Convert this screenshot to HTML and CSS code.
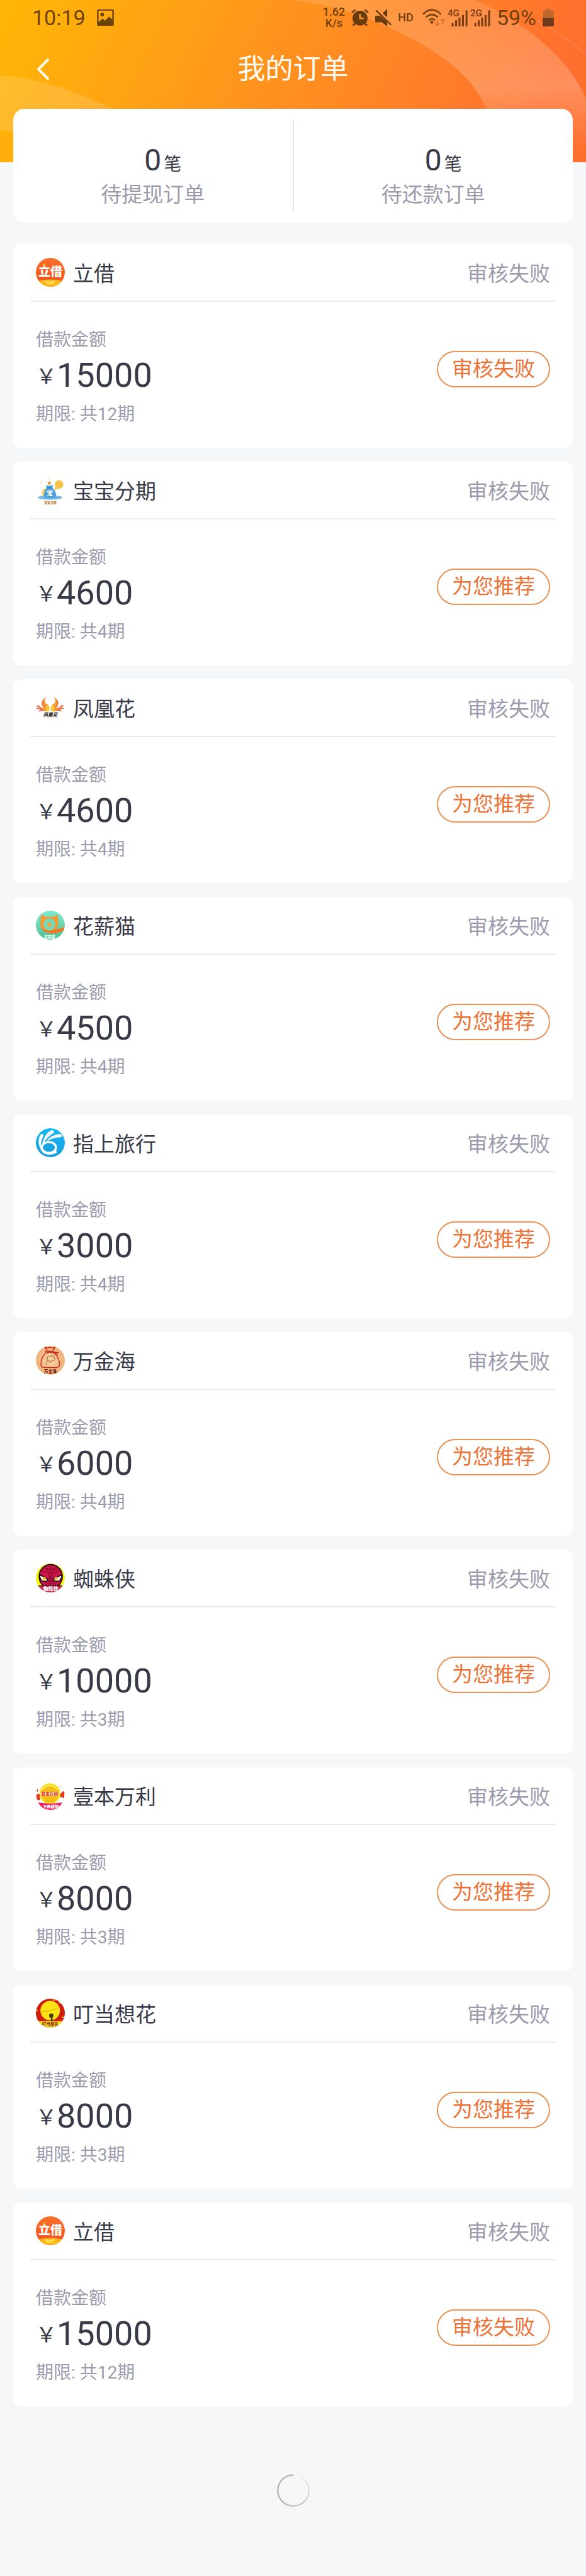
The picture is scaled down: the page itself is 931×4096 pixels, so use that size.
FILE: index.html
```
<!DOCTYPE html>
<html lang="zh-CN">
<head>
    <meta charset="UTF-8">
    <meta name="viewport" content="width=device-width, initial-scale=1">
    <title>我的订单</title>
    <link rel="stylesheet" href="styles.css">
</head>
<body>
<header class="header">
    <svg class="header-bg" viewBox="0 0 1080 309" preserveAspectRatio="none" aria-hidden="true">
        <defs>
            <linearGradient id="bg" gradientUnits="userSpaceOnUse" x1="0" y1="0" x2="900" y2="420">
                <stop offset="0" stop-color="#ffb705"/>
                <stop offset="0.5" stop-color="#ff931e"/>
                <stop offset="1" stop-color="#ff702f"/>
            </linearGradient>
            <linearGradient id="band" gradientUnits="userSpaceOnUse" x1="0" y1="0" x2="0" y2="280">
                <stop offset="0" stop-color="#fff" stop-opacity="0.13"/>
                <stop offset="0.6" stop-color="#fff" stop-opacity="0.22"/>
                <stop offset="1" stop-color="#fff" stop-opacity="0"/>
            </linearGradient>
        </defs>
        <rect width="1080" height="309" fill="url(#bg)"/>
        <path d="M0 143C80 150 150 178 207 207L207 290C150 285 80 262 0 247Z" fill="#fff" fill-opacity="0.14"/>
        <path d="M540 0C640 14 715 48 781 86C842 124 880 165 896 207V309H1080V189C1050 112 970 45 877 0Z" fill="url(#band)"/>
        <path d="M990 40C1025 60 1055 80 1080 104" fill="none" stroke="#fff" stroke-opacity="0.14" stroke-width="2"/>
    </svg>
    <div class="status">
        <span class="time">10:19</span>
        <svg class="pic" viewBox="0 0 90 88" fill="#6a4306">
            <path d="M6 0H84Q90 0 90 6V82Q90 88 84 88H6Q0 88 0 82V6Q0 0 6 0ZM8 7V68L30 49L43 60L65 38L82 54V7Z" fill-rule="evenodd"/>
            <circle cx="28" cy="28" r="10"/>
        </svg>
        <div class="status-right">
            <span class="speed">1.62<br>K/s</span>
            <svg class="alarm" viewBox="0 0 94 92" fill="#693c0b">
                <circle cx="47" cy="49" r="40"/>
                <path d="M47 27V50H66" fill="none" stroke="#ff9c27" stroke-width="8"/>
                <path d="M3 20L22 4M72 4L91 20M20 78L9 89M74 78L85 89" fill="none" stroke="#693c0b" stroke-width="9"/>
            </svg>
            <svg class="mute" viewBox="0 0 84 92" fill="#693c0b">
                <path d="M0 36H14L62 74V92L34 70H0ZM62 0V44L38 24Z"/>
                <path d="M0 36H24L62 70V92L34 70H0Z"/>
                <path d="M4 8L82 84" stroke="#693c0b" stroke-width="8"/>
            </svg>
            <span class="hd">HD</span>
            <div class="signals">
                <svg class="wifi" viewBox="0 0 118 92" fill="none" stroke="#75400f" stroke-width="8">
                    <path d="M3 28Q49 -18 97 28M19 45Q49 15 81 45M34 60Q49 45 66 60"/>
                    <circle cx="49" cy="70" r="8" fill="#75400f" stroke="none"/>
                    <path d="M78 60V86M68 77L78 87L88 77M106 82V55M96 64L106 54L116 64" stroke="#cf7429" stroke-width="6"/>
                </svg>
                <svg class="bars" viewBox="0 0 106 92" fill="#773b13">
                    <text x="0" y="40">4G</text>
                    <path d="M22 74h10v18h-10zM40 60h10v32h-10zM58 46h10v46h-10zM76 32h10v60h-10zM95 8h10v84h-10z"/>
                </svg>
                <svg class="bars" viewBox="0 0 106 92" fill="#773b13">
                    <text x="0" y="40">2G</text>
                    <path d="M22 74h10v18h-10zM40 60h10v32h-10zM58 46h10v46h-10zM76 32h10v60h-10zM95 8h10v84h-10z"/>
                </svg>
            </div>
            <span class="percent">59%</span>
            <svg class="battery" viewBox="0 0 60 95">
                <path d="M16 0H44V10H56Q60 10 60 14V48H0V14Q0 10 4 10H16Z" fill="#c1682c"/>
                <path d="M0 48H60V90Q60 95 55 95H5Q0 95 0 90Z" fill="#70391b"/>
            </svg>
        </div>
    </div>
    <nav class="nav">
        <a class="back" href="#" aria-label="返回">
            <svg viewBox="0 0 20 34" fill="none" stroke="#fffbe8" stroke-width="4" stroke-linecap="round" stroke-linejoin="round">
                <path d="M18 2L3 17L18 32"/>
            </svg>
        </a>
        <h1>我的订单</h1>
    </nav>
</header>

<main>
    <section class="summary">
        <div class="summary-item">
            <p class="count"><span class="num">0</span><span class="unit">笔</span></p>
            <p class="name">待提现订单</p>
        </div>
        <div class="summary-item">
            <p class="count"><span class="num">0</span><span class="unit">笔</span></p>
            <p class="name">待还款订单</p>
        </div>
    </section>

    <ul class="orders">
        <li class="order">
            <div class="order-head">
                <svg class="logo" viewBox="0 0 160 160">
                    <defs>
                        <linearGradient id="red" x1="0" y1="0" x2="0" y2="1">
                            <stop offset="0" stop-color="#f9702a"/>
                            <stop offset="1" stop-color="#f4501c"/>
                        </linearGradient>
                        <clipPath id="round"><circle cx="80" cy="80" r="80"/></clipPath>
                    </defs>
                    <g id="lijie" clip-path="url(#round)">
                        <rect width="160" height="160" fill="url(#red)"/>
                        <path d="M14 128Q80 112 146 128L120 160H40Z" fill="#fbb91f"/>
                        <path d="M50 132Q64 122 76 134Q88 122 106 130L92 146H62Z" fill="#ffd84a"/>
                        <text class="heavy" x="80" y="102" font-size="66" fill="#fff">立借</text>
                        <circle cx="45" cy="41" r="6" fill="none" stroke="#ffc22c" stroke-width="4"/>
                        <path d="M118 84v16" stroke="#ffc22c" stroke-width="7"/>
                    </g>
                </svg>
                <h2>立借</h2>
                <span class="state">审核失败</span>
            </div>
            <div class="order-body">
                <div class="info">
                    <p class="label">借款金额</p>
                    <p class="amount"><span class="yen">￥</span>15000</p>
                    <p class="term">期限: 共12期</p>
                </div>
                <button class="btn" type="button">审核失败</button>
            </div>
        </li>
        <li class="order">
            <div class="order-head">
                <svg class="logo" viewBox="0 0 160 160">
                    <circle cx="128" cy="50" r="24" fill="#f9c74c"/>
                    <path d="M108 62L100 84L130 70Z" fill="#f9c74c"/>
                    <circle cx="126" cy="48" r="12" fill="none" stroke="#e9a92b" stroke-width="3"/>
                    <circle cx="58" cy="96" r="26" fill="#fad069"/>
                    <ellipse cx="78" cy="122" rx="68" ry="12" fill="#6db6ea"/>
                    <circle cx="74" cy="42" r="9" fill="#dfa04c"/>
                    <path d="M54 52Q74 62 96 52L90 68Q110 84 112 108Q112 126 76 126Q42 126 44 106Q46 82 62 68Z" fill="#4a9fe0"/>
                    <path d="M58 68H92" stroke="#2f80c4" stroke-width="5"/>
                    <text class="heavy" x="77" y="112" font-size="36" fill="#fff">宝</text>
                    <text class="heavy" x="80" y="155" font-size="17" fill="#c97f32">宝宝分期</text>
                    <path d="M26 44l8 -4M66 16l10 2" stroke="#fbe3a4" stroke-width="8"/>
                </svg>
                <h2>宝宝分期</h2>
                <span class="state">审核失败</span>
            </div>
            <div class="order-body">
                <div class="info">
                    <p class="label">借款金额</p>
                    <p class="amount"><span class="yen">￥</span>4600</p>
                    <p class="term">期限: 共4期</p>
                </div>
                <button class="btn" type="button">为您推荐</button>
            </div>
        </li>
        <li class="order">
            <div class="order-head">
                <svg class="logo" viewBox="0 0 160 160">
                    <path d="M60 22C30 34 28 66 46 82C36 84 28 78 20 72C34 106 60 104 74 98C78 78 70 64 62 62C44 52 46 34 60 22Z" fill="#f59a35"/>
                    <path d="M96 22C126 34 128 66 110 82C120 84 128 78 136 72C122 106 98 104 84 98C80 78 88 64 96 62C112 52 110 34 96 22Z" fill="#f59a35"/>
                    <path d="M58 100C50 84 56 70 68 64C78 76 76 92 70 102ZM98 100C106 84 100 70 90 64C80 76 82 92 86 102Z" fill="#fccb3c"/>
                    <path d="M46 34C30 48 34 66 44 78M110 34C126 48 122 66 112 78" fill="none" stroke="#ea6434" stroke-width="5"/>
                    <path d="M4 68L42 98M2 82L34 92M16 100L38 94M14 68L22 82M152 68L116 98M156 82L122 92M142 100L120 94M142 66L136 82" stroke="#e4603c" stroke-width="5"/>
                    <text class="heavy" x="80" y="130" font-size="26" font-style="italic" fill="#1f1b1a">凤凰花</text>
                    <path d="M46 137H112" stroke="#f1b67c" stroke-width="3" stroke-dasharray="5 3"/>
                </svg>
                <h2>凤凰花</h2>
                <span class="state">审核失败</span>
            </div>
            <div class="order-body">
                <div class="info">
                    <p class="label">借款金额</p>
                    <p class="amount"><span class="yen">￥</span>4600</p>
                    <p class="term">期限: 共4期</p>
                </div>
                <button class="btn" type="button">为您推荐</button>
            </div>
        </li>
        <li class="order">
            <div class="order-head">
                <svg class="logo" viewBox="0 0 160 160">
                    <defs>
                        <linearGradient id="mint" x1="0" y1="0" x2="0" y2="1">
                            <stop offset="0" stop-color="#7fead2"/>
                            <stop offset="1" stop-color="#53bf93"/>
                        </linearGradient>
                    </defs>
                    <g clip-path="url(#round)">
                        <rect width="160" height="160" fill="url(#mint)"/>
                        <path d="M30 22L54 34H96L120 22L124 60Q128 86 110 100Q134 104 154 88L156 104Q128 128 84 126Q40 122 26 88Q24 50 30 22Z" fill="#f69a35"/>
                        <path d="M28 94Q60 122 110 102Q140 102 154 90L156 104Q128 128 84 126Q44 122 28 94Z" fill="#e9782c"/>
                        <circle cx="75" cy="76" r="33" fill="#75d9bb"/>
                        <path d="M75 62L89 77L75 92L61 77Z" fill="#f9a333"/>
                        <text class="heavy" x="76" y="154" font-size="20" fill="#e8fff6">花薪猫</text>
                    </g>
                </svg>
                <h2>花薪猫</h2>
                <span class="state">审核失败</span>
            </div>
            <div class="order-body">
                <div class="info">
                    <p class="label">借款金额</p>
                    <p class="amount"><span class="yen">￥</span>4500</p>
                    <p class="term">期限: 共4期</p>
                </div>
                <button class="btn" type="button">为您推荐</button>
            </div>
        </li>
        <li class="order">
            <div class="order-head">
                <svg class="logo" viewBox="0 0 160 160">
                    <defs>
                        <linearGradient id="sky" x1="0" y1="0" x2="0" y2="1">
                            <stop offset="0" stop-color="#16b9f1"/>
                            <stop offset="1" stop-color="#1a9be0"/>
                        </linearGradient>
                    </defs>
                    <circle cx="80" cy="80" r="80" fill="url(#sky)"/>
                    <path d="M24 110C10 80 14 46 30 32C44 28 44 42 38 50C30 68 26 86 28 100ZM34 96C38 62 58 22 84 12C104 8 104 22 92 30C68 44 50 66 42 88ZM56 76C74 48 104 30 140 32C150 40 142 50 132 50C104 50 80 58 60 74Z" fill="#fff"/>
                    <ellipse cx="72" cy="106" rx="39" ry="30" fill="none" stroke="#fff" stroke-width="11"/>
                    <path d="M30 104C32 132 62 152 110 132" fill="none" stroke="#fff" stroke-width="12" stroke-linecap="round"/>
                    <path d="M96 122L112 126" stroke="#fff" stroke-width="10"/>
                </svg>
                <h2>指上旅行</h2>
                <span class="state">审核失败</span>
            </div>
            <div class="order-body">
                <div class="info">
                    <p class="label">借款金额</p>
                    <p class="amount"><span class="yen">￥</span>3000</p>
                    <p class="term">期限: 共4期</p>
                </div>
                <button class="btn" type="button">为您推荐</button>
            </div>
        </li>
        <li class="order">
            <div class="order-head">
                <svg class="logo" viewBox="0 0 160 160">
                    <defs>
                        <radialGradient id="sand">
                            <stop offset="0" stop-color="#fbd3a0"/>
                            <stop offset="1" stop-color="#efb27c"/>
                        </radialGradient>
                    </defs>
                    <circle cx="80" cy="80" r="80" fill="url(#sand)"/>
                    <g fill="none" stroke="#c9241c" stroke-width="5" stroke-linejoin="round">
                        <path d="M62 34C40 50 28 76 28 100Q28 120 48 120H112Q132 120 131 100C130 76 116 50 94 34"/>
                        <path d="M64 30L50 8Q64 14 76 8Q92 14 106 8L92 30Z"/>
                        <path d="M50 34Q76 24 98 34L126 38M98 34L122 50M62 38Q78 30 96 40"/>
                    </g>
                    <path d="M64 62L98 54L106 78L84 84L78 94L74 82L62 84ZM56 110Q54 94 64 88" fill="none" stroke="#8c5a35" stroke-width="3"/>
                    <text class="heavy" x="80" y="150" font-size="23" fill="#7c2316">万金海</text>
                </svg>
                <h2>万金海</h2>
                <span class="state">审核失败</span>
            </div>
            <div class="order-body">
                <div class="info">
                    <p class="label">借款金额</p>
                    <p class="amount"><span class="yen">￥</span>6000</p>
                    <p class="term">期限: 共4期</p>
                </div>
                <button class="btn" type="button">为您推荐</button>
            </div>
        </li>
        <li class="order">
            <div class="order-head">
                <svg class="logo" viewBox="0 0 160 160">
                    <g clip-path="url(#round)">
                        <rect width="160" height="160" fill="#f8f411"/>
                        <path d="M82 6C116 6 146 34 146 72C146 98 134 116 116 130H48C30 116 18 98 18 72C18 34 48 6 82 6Z" fill="#c81447" stroke="#1d0a10" stroke-width="6"/>
                        <path d="M82 8V128M58 12Q66 50 80 86M108 12Q98 50 84 86M30 40Q80 62 136 40M40 24Q80 40 124 24M22 62L80 88L142 62M52 118Q80 100 112 118M44 104Q80 90 120 104" fill="none" stroke="#5b0a26" stroke-width="2"/>
                        <path d="M20 62Q50 76 70 94Q50 102 34 96Q22 84 20 62ZM144 62Q114 76 94 94Q112 102 128 96Q142 84 144 62Z" fill="#fff" stroke="#1d0a10" stroke-width="5"/>
                        <circle cx="46" cy="84" r="9" fill="#eec63b"/>
                        <circle cx="112" cy="84" r="9" fill="#eec63b"/>
                        <path d="M0 124H160V160H0Z" fill="#d62553"/>
                        <path d="M14 124H144" stroke="#1d0a10" stroke-width="4"/>
                        <text class="heavy" x="82" y="149" font-size="28" fill="#fff">蜘蛛侠</text>
                    </g>
                </svg>
                <h2>蜘蛛侠</h2>
                <span class="state">审核失败</span>
            </div>
            <div class="order-body">
                <div class="info">
                    <p class="label">借款金额</p>
                    <p class="amount"><span class="yen">￥</span>10000</p>
                    <p class="term">期限: 共3期</p>
                </div>
                <button class="btn" type="button">为您推荐</button>
            </div>
        </li>
        <li class="order">
            <div class="order-head">
                <svg class="logo" viewBox="0 0 160 160">
                    <path d="M4 60L8 42L14 56ZM2 78Q10 66 24 74V104Q12 110 4 98ZM158 60L150 56L134 72V88L156 94Z" fill="#dd3b1f"/>
                    <path d="M130 34l8 -6" stroke="#f6c9a0" stroke-width="6"/>
                    <circle cx="78" cy="70" r="58" fill="#fbe032"/>
                    <circle cx="78" cy="72" r="48" fill="#f5bf12"/>
                    <path d="M38 46Q78 6 118 46" fill="none" stroke="#fff27a" stroke-width="5"/>
                    <rect x="28" y="60" width="96" height="22" rx="6" fill="#ffe9a8"/>
                    <text class="heavy" x="76" y="79" font-size="23" fill="#dd3345">壹本万利</text>
                    <path d="M12 118Q80 130 146 118Q124 160 80 160Q34 160 12 118Z" fill="#ee1f63"/>
                    <text class="heavy" x="80" y="148" font-size="22" font-style="italic" fill="#fff">下款超快</text>
                </svg>
                <h2>壹本万利</h2>
                <span class="state">审核失败</span>
            </div>
            <div class="order-body">
                <div class="info">
                    <p class="label">借款金额</p>
                    <p class="amount"><span class="yen">￥</span>8000</p>
                    <p class="term">期限: 共3期</p>
                </div>
                <button class="btn" type="button">为您推荐</button>
            </div>
        </li>
        <li class="order">
            <div class="order-head">
                <svg class="logo" viewBox="0 0 160 160">
                    <g clip-path="url(#round)">
                        <rect width="160" height="160" fill="#cf1d0d"/>
                        <path d="M96 6l10 4M128 18l8 8M2 64l8 2M144 100l10 6" stroke="#f9c92b" stroke-width="7"/>
                        <circle cx="79" cy="66" r="54" fill="#fbe116"/>
                        <path d="M28 74Q84 68 130 48" fill="none" stroke="#e5bd12" stroke-width="5"/>
                        <path d="M0 124H160V160H0Z" fill="#fbe116"/>
                        <circle cx="85" cy="94" r="12" fill="#4a3a10"/>
                        <path d="M83 98L82 124H94L90 98Z" fill="#4a3a10"/>
                        <text class="heavy" x="79" y="150" font-size="22" fill="#8b2d10">叮当想花</text>
                    </g>
                </svg>
                <h2>叮当想花</h2>
                <span class="state">审核失败</span>
            </div>
            <div class="order-body">
                <div class="info">
                    <p class="label">借款金额</p>
                    <p class="amount"><span class="yen">￥</span>8000</p>
                    <p class="term">期限: 共3期</p>
                </div>
                <button class="btn" type="button">为您推荐</button>
            </div>
        </li>
        <li class="order">
            <div class="order-head">
                <svg class="logo" viewBox="0 0 160 160"><use href="#lijie"/></svg>
                <h2>立借</h2>
                <span class="state">审核失败</span>
            </div>
            <div class="order-body">
                <div class="info">
                    <p class="label">借款金额</p>
                    <p class="amount"><span class="yen">￥</span>15000</p>
                    <p class="term">期限: 共12期</p>
                </div>
                <button class="btn" type="button">审核失败</button>
            </div>
        </li>
    </ul>

    <div class="loading" role="status" aria-label="加载中"></div>
</main>
</body>
</html>
```

FILE: styles.css
```
* {
    padding: 0;
    margin: 0;
    box-sizing: border-box;
}

body {
    background-color: #f6f7f9;
    color: #383a48;
    font-family: Roboto, "Noto Sans CJK SC", sans-serif;
}

ul {
    list-style: none;
}

svg {
    display: block;
    flex: none;
}

/* 头部 */
.header {
    position: relative;
    padding-bottom: 94px;
}

.header-bg {
    position: absolute;
    left: 0;
    top: 0;
    width: 100%;
    height: 100%;
    z-index: -1;
}

.status {
    display: flex;
    align-items: center;
    height: 56px;
    padding: 0 51px;
    color: #70410d;
}

.time,
.percent {
    font-size: 34px;
    line-height: 40px;
}

.pic {
    width: 27px;
    height: 26px;
    margin-left: 18px;
}

.status-right {
    display: flex;
    align-items: center;
    gap: 10px;
    margin-left: auto;
}

.speed,
.hd {
    font-size: 18px;
    line-height: 18px;
    font-weight: 500;
    text-align: center;
}

.alarm {
    width: 28px;
    height: 28px;
}

.mute {
    width: 26px;
    height: 28px;
}

.signals {
    display: flex;
    gap: 4px;
    margin-left: 4px;
}

.wifi {
    width: 36px;
    height: 28px;
}

.bars {
    width: 32px;
    height: 28px;
    overflow: visible;
}

.bars text {
    font-size: 50px;
    font-weight: 500;
}

.battery {
    width: 18px;
    height: 28px;
}

.nav {
    display: grid;
    grid-template-columns: 1fr auto 1fr;
    align-items: center;
    height: 108px;
    padding: 0 58px;
}

.back {
    justify-self: start;
}

.back svg {
    width: 20px;
    height: 34px;
}

.nav h1 {
    font-size: 44px;
    line-height: 60px;
    font-weight: 400;
    color: #fffdf5;
}

/* 订单统计 */
.summary {
    position: relative;
    display: flex;
    margin: -85px 21px 34px;
    padding: 18px 0;
    background-color: #fff;
    border-radius: 18px;
}

.summary-item {
    flex: 1;
    padding: 34px 0 1px;
    text-align: center;
}

.summary-item + .summary-item {
    border-left: 2px solid #e2e2e6;
}

.count {
    display: grid;
    grid-template-columns: 1fr auto 1fr;
    align-items: baseline;
}

.num {
    grid-column: 2;
    font-size: 48px;
    line-height: 60px;
}

.unit {
    justify-self: start;
    margin-left: 4px;
    font-size: 28px;
    line-height: 28px;
}

.name {
    font-size: 33px;
    line-height: 50px;
    color: #9c9bad;
}

/* 订单列表 */
.orders {
    display: flex;
    flex-direction: column;
    gap: 22px;
    padding: 0 21px;
}

.order {
    padding: 0 27px;
    background-color: #fff;
    border-radius: 12px;
}

.order-head {
    display: flex;
    align-items: center;
    height: 92px;
    padding: 0 9px;
    border-bottom: 2px solid #ededef;
}

.logo {
    width: 46px;
    height: 46px;
}

.heavy {
    font-family: "Noto Sans CJK SC", sans-serif;
    font-weight: 900;
    text-anchor: middle;
}

.order-head h2,
.state {
    padding-top: 6px;
    font-size: 33px;
    line-height: 48px;
    font-weight: 400;
}

.order-head h2 {
    margin-left: 13px;
}

.state {
    margin-left: auto;
    color: #9c9bad;
}

.order-body {
    display: flex;
    justify-content: space-between;
    align-items: flex-start;
    padding: 41px 9px 27px;
}

.label {
    font-size: 28px;
    line-height: 40px;
    color: #9c9bad;
}

.amount {
    font-size: 54px;
    line-height: 72px;
}

.yen {
    font-size: 33px;
    line-height: 33px;
    vertical-align: 5px;
}

.term {
    font-size: 28px;
    line-height: 52px;
    color: #9c9bad;
}

.btn {
    width: 180px;
    height: 58px;
    margin-top: 37px;
    border: 2px solid #e8955a;
    border-radius: 29px;
    background-color: #fff;
    color: #ec7236;
    font-family: inherit;
    font-size: 33px;
    line-height: 48px;
}

.loading {
    width: 52px;
    height: 52px;
    margin: 108px auto 108px;
    border-radius: 50%;
    background: conic-gradient(#f6f7f9, #d0d0d1 35%, #b4b4b5 60%, #b0b0b1);
    -webkit-mask: radial-gradient(circle closest-side, transparent 23px, #000 24px);
    mask: radial-gradient(circle closest-side, transparent 23px, #000 24px);
}
```
